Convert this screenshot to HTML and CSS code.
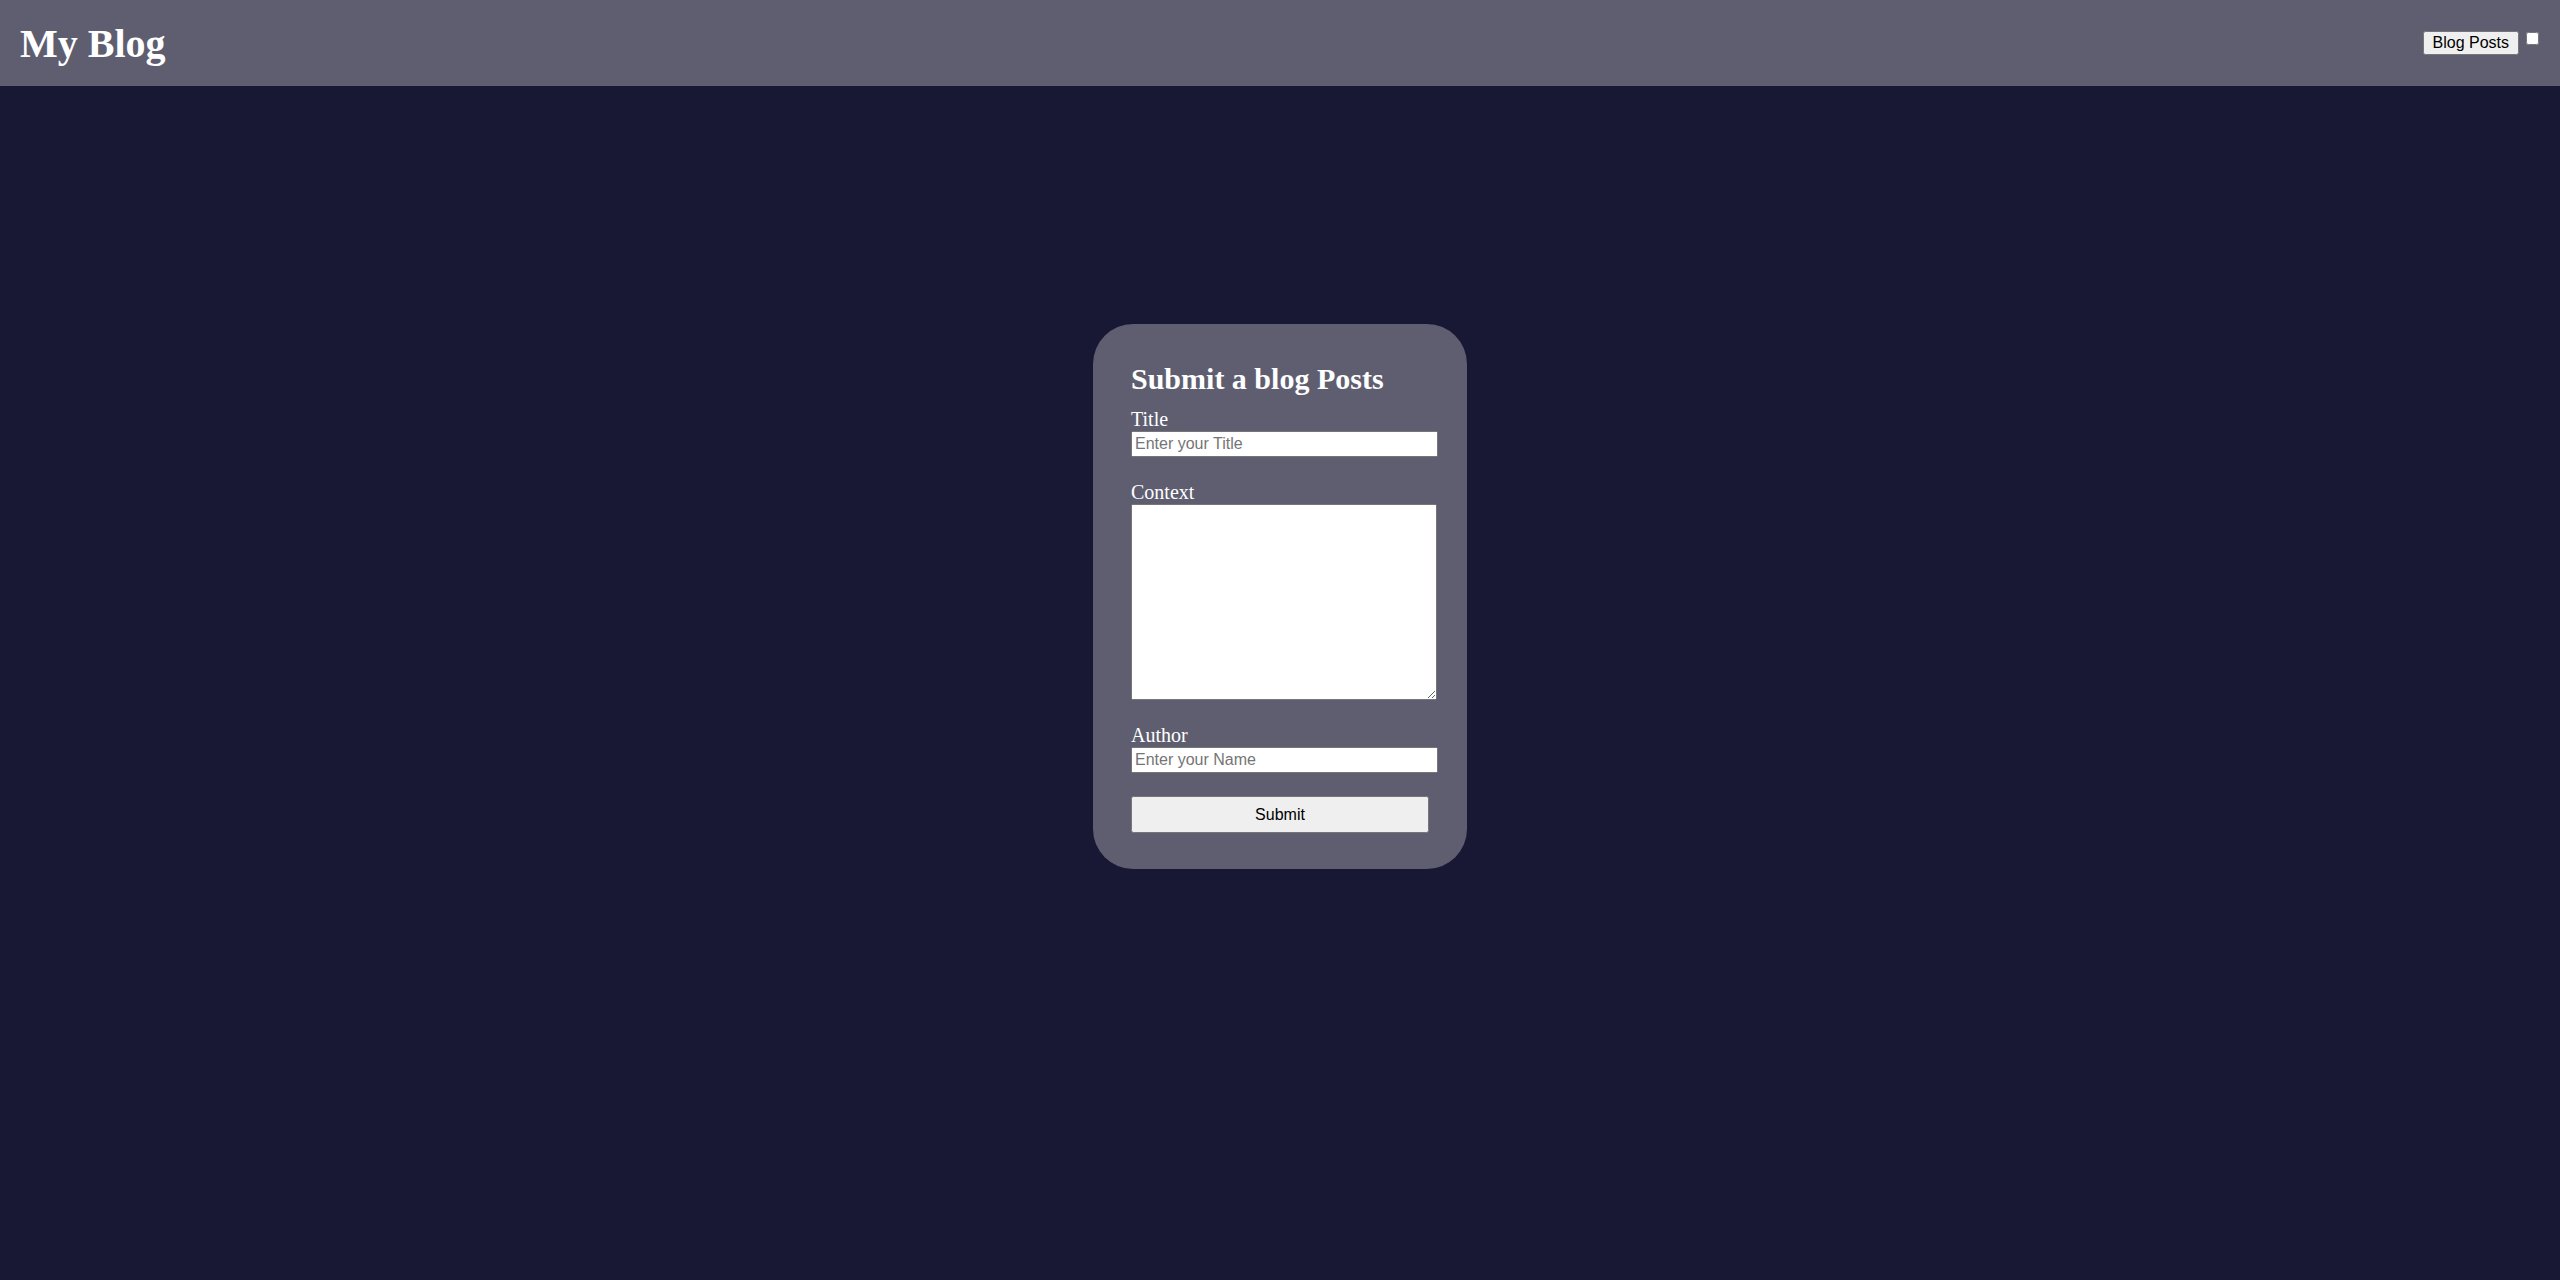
FILE: index.html
```html
<!DOCTYPE html>
<html lang="en">
<head>
<meta charset="utf-8">
<title>My Blog</title>
<link rel="stylesheet" href="styles.css">
</head>
<body>
<header class="topbar">
  <h1 class="brand">My Blog</h1>
  <nav class="nav">
    <button class="nav-btn" type="button">Blog Posts</button>
    <input class="nav-check" type="checkbox">
  </nav>
</header>
<main class="main">
  <form class="card">
    <h2 class="card-title">Submit a blog Posts</h2>
    <div class="field">
      <label class="label" for="title">Title</label>
      <input class="text-input" id="title" type="text" placeholder="Enter your Title">
    </div>
    <div class="field">
      <label class="label" for="context">Context</label>
      <textarea class="textarea" id="context"></textarea>
    </div>
    <div class="field">
      <label class="label" for="author">Author</label>
      <input class="text-input" id="author" type="text" placeholder="Enter your Name">
    </div>
    <button class="submit" type="submit">Submit</button>
  </form>
</main>
</body>
</html>
```
FILE: styles.css
```css
html, body {
  margin: 0;
  padding: 0;
}
body {
  background: #181834;
  min-height: 1280px;
  font-family: "Liberation Serif", "Times New Roman", serif;
  color: #ffffff;
}
.topbar {
  height: 86px;
  background: #5e5e70;
  display: flex;
  align-items: center;
  justify-content: space-between;
}
.brand {
  margin: 1px 0 0 20px;
  font-size: 40px;
  font-weight: bold;
  color: #ffffff;
}
.nav {
  display: flex;
  align-items: flex-start;
  padding-right: 21px;
}
.nav-btn {
  font-family: "Liberation Sans", Arial, sans-serif;
  font-size: 16px;
  padding: 1px 8px;
  margin: 0;
}
.nav-check {
  width: 13px;
  height: 13px;
  margin: 1px 0 0 7px;
}
.main {
  display: flex;
  justify-content: center;
  padding-top: 238px;
}
.card {
  width: 374px;
  box-sizing: border-box;
  background: #5e5e70;
  border-radius: 40px;
  padding: 38px 38px 36px;
  display: flex;
  flex-direction: column;
}
.card-title {
  margin: 0 0 12px;
  font-size: 30px;
  font-weight: bold;
}
.field {
  display: flex;
  flex-direction: column;
  align-items: flex-start;
  margin-bottom: 24px;
}
.label {
  font-size: 20px;
  line-height: 23px;
}
.text-input {
  width: 307px;
  height: 26px;
  box-sizing: border-box;
  font-family: "Liberation Sans", Arial, sans-serif;
  font-size: 16px;
  margin: 0;
  padding: 1px 2px;
}
.textarea {
  width: 306px;
  height: 196px;
  box-sizing: border-box;
  margin: 0;
  font-family: "Liberation Mono", monospace;
  font-size: 13px;
}
.submit {
  width: 298px;
  height: 37px;
  box-sizing: border-box;
  font-family: "Liberation Sans", Arial, sans-serif;
  font-size: 16px;
  margin: -1px 0 0;
}
```
